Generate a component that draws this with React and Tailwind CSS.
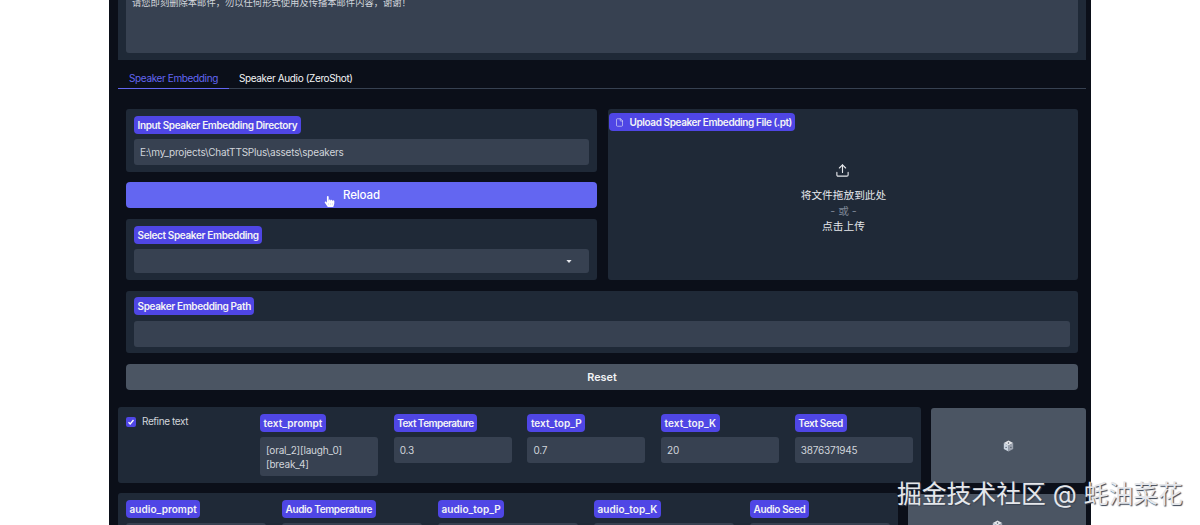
import React from "react";
import { Upload, File } from "lucide-react";
import { FaHandPointer } from "react-icons/fa";

const sans = "font-['Inter','Noto_Sans_CJK_SC',sans-serif]";

function Badge({ children, className = "", tracking = "tracking-[-0.36px]" }) {
  return (
    <span className={`inline-flex h-[18px] w-fit items-center whitespace-nowrap rounded-[4px] bg-[#4f46e5] px-[3.5px] text-[10px] font-semibold text-[#f3f4f6] ${tracking} ${className}`}>
      {children}
    </span>
  );
}

function Cube() {
  return (
    <svg width="11" height="12" viewBox="0 0 10 11" aria-hidden="true">
      <path d="M5 .5 9.3 2.7 5 5 .7 2.7Z" fill="#e5e7eb" />
      <path d="M.7 2.7 5 5v5.5L.7 8.2Z" fill="#cbd5e1" />
      <path d="M9.3 2.7 5 5v5.5l4.3-2.3Z" fill="#9ca3af" />
      <circle cx="5" cy="2.7" r=".7" fill="#4b5563" />
      <circle cx="2.8" cy="6.8" r=".6" fill="#4b5563" />
      <circle cx="7.2" cy="6.8" r=".6" fill="#4b5563" />
    </svg>
  );
}

function Field({ label, value, width, height = "h-[26px]", tracking }) {
  return (
    <div className="flex shrink-0 flex-col gap-[5px]" style={{ width }}>
      <Badge tracking={tracking}>{label}</Badge>
      <div className={`${height} rounded-[3px] bg-[#374151] px-[6px] pt-[7px] text-[10px] leading-[13.5px] tracking-[-0.2px] text-[#d1d5db]`}>
        {value}
      </div>
    </div>
  );
}

const wide = "tracking-[0.05px]";

export default function App() {
  return (
    <div className={`h-[525px] overflow-hidden bg-white ${sans} relative`}>
      <div className="mx-auto h-[525px] w-[982px] overflow-hidden bg-[#0b0f19] pl-[9px] pr-[5px]">
        {/* message box cut off by the top of the window */}
        <div className="h-[60px] bg-[#1f2937] px-2 pb-[7px]">
          <div className="h-[53px] overflow-hidden rounded-b-[3px] bg-[#374151] px-[6px]">
            <p className="-mt-[3px] whitespace-nowrap text-[9.3px] leading-[12px] text-[#d1d5db]">
              请您即刻删除本邮件，勿以任何形式使用及传播本邮件内容，谢谢！
            </p>
          </div>
        </div>

        {/* tabs */}
        <div className="mt-[10px] flex h-[19px] border-b border-[#374151] text-[10px] leading-[16px] tracking-[-0.37px]">
          <div className="-mb-px flex w-[111px] justify-center border-b-[1.5px] border-[#6366f1] text-[#6366f1]">Speaker Embedding</div>
          <div className="ml-[10px] text-[#f3f4f6]">Speaker Audio (ZeroShot)</div>
        </div>

        {/* tab body */}
        <div className="relative mt-[20px] flex flex-col gap-[11px] px-2">
          <div className="flex gap-[11px]">
            <div className="flex w-[471px] shrink-0 flex-col gap-[10px]">
              <div className="flex h-[63px] flex-col gap-[5px] rounded-[3px] bg-[#1f2937] px-2 pt-[7px]">
                <Badge>Input Speaker Embedding Directory</Badge>
                <div className="h-[26px] rounded-[3px] bg-[#374151] px-[6px] pt-[7px] text-[10px] leading-[13.5px] tracking-[-0.2px] text-[#d1d5db]">
                  E:\my_projects\ChatTTSPlus\assets\speakers
                </div>
              </div>
              <button className="relative flex h-[26px] items-center justify-center rounded-[4px] bg-[#6366f1] pt-[2px] text-[11.5px] font-medium tracking-[-0.1px] text-white">
                Reload
                <FaHandPointer className="absolute left-[198px] top-[14px] text-[11px] text-white" />
              </button>
              <div className="mt-px flex h-[61px] flex-col gap-[5px] rounded-[3px] bg-[#1f2937] px-2 pt-[7px]">
                <Badge>Select Speaker Embedding</Badge>
                <div className="flex h-[24px] items-center justify-end rounded-[3px] bg-[#374151] pr-[17px]">
                  <svg width="6" height="3" viewBox="0 0 7 4" aria-hidden="true"><path d="M0 0h7L3.5 4Z" fill="#e5e7eb" /></svg>
                </div>
              </div>
            </div>

            <div className="flex h-[171px] flex-1 flex-col rounded-[3px] bg-[#1f2937] pl-px pt-[4px]">
              <Badge className="gap-[5.5px] pl-[6px] pr-[3px]" tracking="tracking-[-0.4px]">
                <File size={9} strokeWidth={1.5} />
                Upload Speaker Embedding File (.pt)
              </Badge>
              <div className="mt-[32px] flex flex-col items-center text-[10.7px] leading-[15.5px] text-[#e5e7eb]">
                <Upload size={15} strokeWidth={1.8} className="mb-[10px] -translate-x-px" />
                <span>将文件拖放到此处</span>
                <span className="text-[#7c8594]">- 或 -</span>
                <span>点击上传</span>
              </div>
            </div>
          </div>

          <div className="flex h-[62px] flex-col gap-[6px] rounded-[3px] bg-[#1f2937] px-2 pt-[6px]">
            <Badge>Speaker Embedding Path</Badge>
            <div className="h-[26px] rounded-[3px] bg-[#374151]" />
          </div>

          <button className="h-[26px] rounded-[4px] bg-[#4b5563] pt-[2px] text-[10.8px] font-semibold text-[#f3f4f6]">Reset</button>
        </div>

        {/* parameters */}
        <div className="mt-[17px] flex gap-[10px]">
          <div className="flex h-[76px] w-[803px] shrink-0 rounded-[3px] bg-[#1f2937] pl-2 pt-[7px]">
            <label className="flex h-fit w-[134px] shrink-0 items-center gap-[6px] text-[10px] tracking-[-0.4px] text-[#d1d5db]">
              <span className="flex h-[10px] w-[10px] items-center justify-center rounded-[2px] bg-[#4f46e5]">
                <svg width="8" height="8" viewBox="0 0 8 8" aria-hidden="true"><path d="M1.5 4.2 3.2 6l3.3-4" fill="none" stroke="#fff" strokeWidth="1.3" /></svg>
              </span>
              Refine text
            </label>
            <div className="flex gap-[15.7px]">
              <Field label="text_prompt" tracking={wide} value={<>[oral_2][laugh_0]<br />[break_4]</>} width={118} height="h-[39px]" />
              <Field label="Text Temperature" tracking="tracking-[-0.55px]" value="0.3" width={118} />
              <Field label="text_top_P" tracking={wide} value="0.7" width={118} />
              <Field label="text_top_K" tracking={wide} value="20" width={118} />
              <Field label="Text Seed" value="3876371945" width={118} />
            </div>
          </div>
          <button className="mt-px flex h-[75px] flex-1 items-center justify-center rounded-[3px] bg-[#4b5563]"><Cube /></button>
        </div>

        <div className="mt-[10px] flex gap-[10px]">
          <div className="flex h-[76px] w-[780px] shrink-0 gap-[16px] rounded-[3px] bg-[#1f2937] pl-2 pt-[7px]">
            <Field label="audio_prompt" tracking={wide} value="" width={140} />
            <Field label="Audio Temperature" value="" width={140} />
            <Field label="audio_top_P" tracking={wide} value="" width={140} />
            <Field label="audio_top_K" tracking={wide} value="" width={140} />
            <Field label="Audio Seed" value="" width={140} />
          </div>
          <button className="mt-px flex h-[76px] flex-1 items-start justify-start rounded-[3px] bg-[#4b5563] pl-[84px] pt-[26px]"><Cube /></button>
        </div>
      </div>

      {/* watermark */}
      <div className="absolute left-[897px] top-[478px] whitespace-nowrap text-[24.8px] leading-[32px] text-[#e5e7eb] [text-shadow:1px_1px_1px_#374151]">
        掘金技术社区 @ 蚝油菜花
      </div>
    </div>
  );
}
